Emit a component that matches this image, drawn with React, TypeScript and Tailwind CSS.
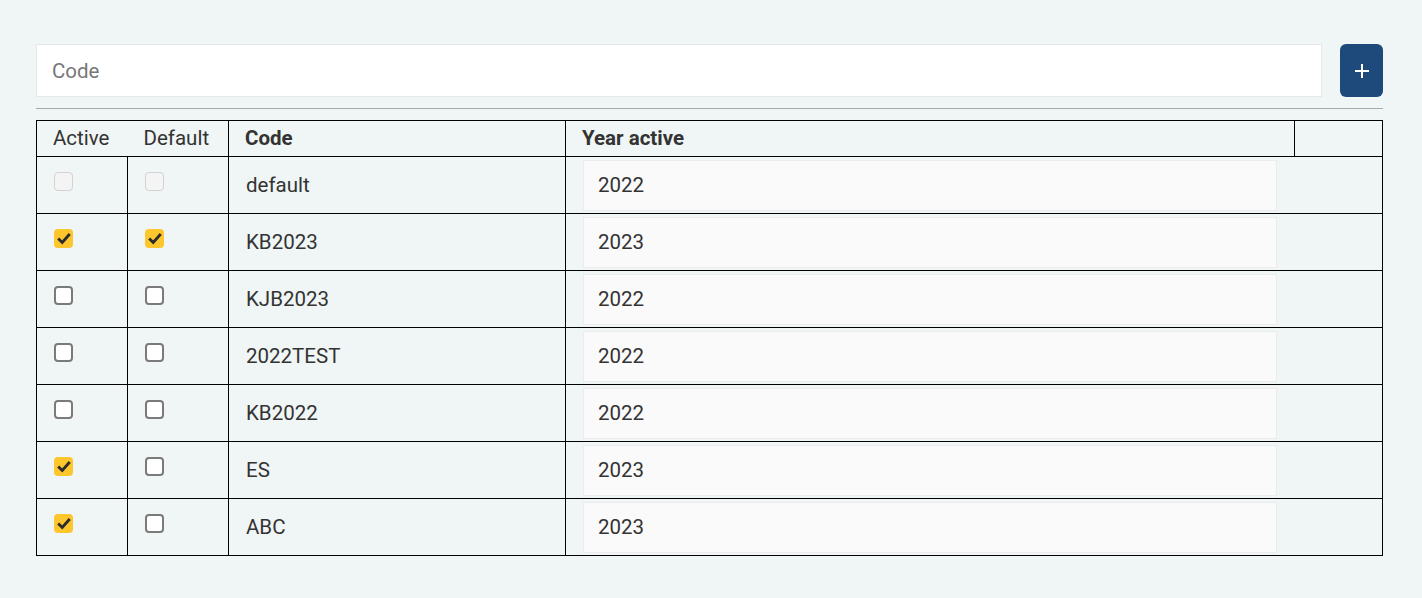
import React from 'react';

type Row = { code: string; year: string; active: boolean; isDefault: boolean; disabled?: boolean };

const rows: Row[] = [
  { code: 'default', year: '2022', active: false, isDefault: false, disabled: true },
  { code: 'KB2023', year: '2023', active: true, isDefault: true },
  { code: 'KJB2023', year: '2022', active: false, isDefault: false },
  { code: '2022TEST', year: '2022', active: false, isDefault: false },
  { code: 'KB2022', year: '2022', active: false, isDefault: false },
  { code: 'ES', year: '2023', active: true, isDefault: false },
  { code: 'ABC', year: '2023', active: true, isDefault: false },
];

function Check({ checked, disabled }: { checked: boolean; disabled?: boolean }) {
  if (disabled) {
    return <span className="block w-[19px] h-[19px] rounded-[4px] border-[1.5px] border-[#d2d2d2] bg-[#f4f4f4]" />;
  }
  if (checked) {
    return (
      <span className="flex items-center justify-center w-[19px] h-[19px] rounded-[4px] bg-[#fcc62c]">
        <svg className="w-[14px] h-[14px]" viewBox="0 0 16 16" fill="none">
          <path d="M2.5 8.5l3.5 3.5 7.5-8.5" stroke="#2b2b2b" strokeWidth={3.2} strokeLinecap="square" />
        </svg>
      </span>
    );
  }
  return <span className="block w-[19px] h-[19px] rounded-[4px] border-2 border-[#7a7a7a] bg-white" />;
}

export default function App() {
  return (
    <div
      className="min-h-screen bg-[#f0f5f5] pl-[36px] pr-[39px] pt-[44px] text-[#333] text-[20.5px]"
      style={{ fontFamily: 'Roboto, "Liberation Sans", sans-serif' }}
    >
      <div className="flex gap-[18px]">
        <input
          placeholder="Code"
          className="flex-1 h-[53px] bg-white border border-[#e6e8e8] pl-[15px] text-[20.5px] text-[#333] placeholder:text-[#777] outline-none"
        />
        <button className="w-[43px] h-[53px] rounded-[6px] bg-[#1d4a7a] flex items-center justify-center">
          <svg className="w-[14px] h-[14px]" viewBox="0 0 14 14">
            <path d="M7 0v14M0 7h14" stroke="white" strokeWidth={2} />
          </svg>
        </button>
      </div>
      <div className="mt-[11px] mb-[11px] h-px bg-[#a8a8a8]" />
      <table className="w-full border-collapse border border-black table-fixed">
        <colgroup>
          <col className="w-[91px]" />
          <col className="w-[101px]" />
          <col className="w-[337px]" />
          <col className="w-[729px]" />
          <col />
        </colgroup>
        <thead>
          <tr className="h-[36px]">
            <th className="text-left font-normal pl-[16px] pb-px">Active</th>
            <th className="text-left font-normal pl-[16px] pb-px">Default</th>
            <th className="text-left font-bold pl-[16px] pb-px border-l border-black">Code</th>
            <th className="text-left font-bold pl-[16px] pb-px border-l border-black">Year active</th>
            <th className="border-l border-black" />
          </tr>
        </thead>
        <tbody>
          {rows.map((r) => (
            <tr key={r.code} className="h-[57px] border-t border-black">
              <td className="align-top pl-[17px] pt-[15px] border-r border-black">
                <Check checked={r.active} disabled={r.disabled} />
              </td>
              <td className="align-top pl-[17px] pt-[15px] border-r border-black">
                <Check checked={r.isDefault} disabled={r.disabled} />
              </td>
              <td className="pl-[17px] border-r border-black">{r.code}</td>
              <td colSpan={2} className="pl-[17px] py-[2px]">
                <div className="w-[694px] h-[51px] bg-[#fafafa] border border-[#ececec] pl-[14px] flex items-center">
                  {r.year}
                </div>
              </td>
            </tr>
          ))}
        </tbody>
      </table>
    </div>
  );
}
